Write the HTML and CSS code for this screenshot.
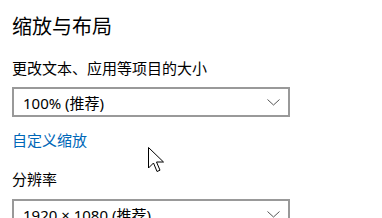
FILE: index.html
```html
<html>
    <head>
        <meta charset="utf-8">
        <link rel="stylesheet" href="styles.css">
    </head>
    <body>
        <div class="page">
            <h1 class="title">缩放与布局</h1>

            <div class="label label-first">更改文本、应用等项目的大小</div>
            <div class="select">
                <span>100% (推荐)</span>
                <svg class="chevron" width="13" height="7" viewBox="0 0 13 7"><polyline points="0.5,0.5 6.5,6 12.5,0.5" fill="none" stroke="#555" stroke-width="1"/></svg>
            </div>

            <a class="link" href="#">自定义缩放</a>

            <div class="label label-res">分辨率</div>
            <div class="select select-res">
                <span>1920 × 1080 (推荐)</span>
                <svg class="chevron" width="13" height="7" viewBox="0 0 13 7"><polyline points="0.5,0.5 6.5,6 12.5,0.5" fill="none" stroke="#555" stroke-width="1"/></svg>
            </div>
        </div>

        <!-- mouse pointer -->
        <svg class="cursor" width="17" height="27" viewBox="0 0 17 27">
            <path d="M0.5,0.5 L0.5,21 L5.5,16 L9,24.5 L12,23.2 L8.5,15 L15.5,15 Z" fill="#fff" stroke="#000" stroke-width="1" stroke-linejoin="miter"/>
        </svg>
    </body>
</html>
```

FILE: styles.css
```css
body {
    margin: 0px;
    padding: 0px;
    background: white;
    font-family: "Noto Sans", "Noto Sans CJK SC", sans-serif;
    color: black;
    overflow: hidden;
}

.page {
    padding: 13px 12px 0px 12px;
}

.title {
    margin: 0px;
    font-size: 20px;
    font-weight: normal;
    line-height: 28px;
}

.label {
    font-size: 15px;
    line-height: 20px;
}

.label-first {
    margin-top: 17px;
}

.label-res {
    margin-top: 19px;
}

.select {
    box-sizing: border-box;
    width: 278px;
    height: 30px;
    margin-top: 9px;
    border: 2px solid #999;
    padding: 0px 8px 0px 9px;
    display: flex;
    align-items: center;
    justify-content: space-between;
    font-size: 15px;
}

.select-res {
    margin-top: 10px;
}

.link {
    display: block;
    margin-top: 13px;
    font-size: 15px;
    line-height: 20px;
    color: #0067b8;
    text-decoration: none;
}

.cursor {
    position: absolute;
    left: 148px;
    top: 147px;
}
```
